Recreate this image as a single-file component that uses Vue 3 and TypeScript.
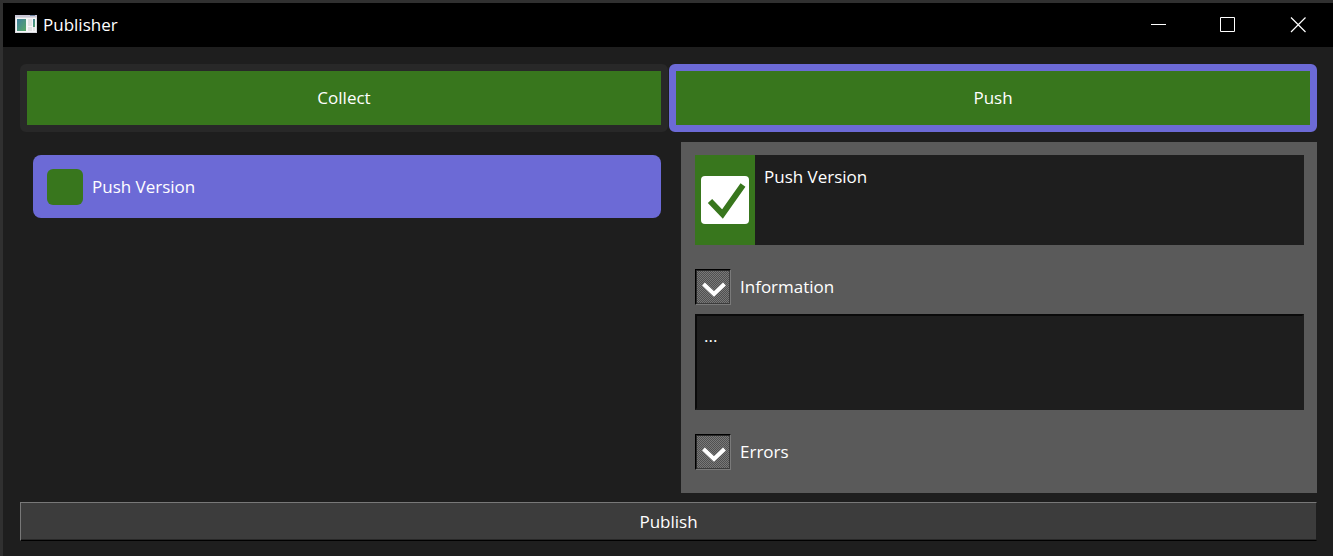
<script setup lang="ts">
import { ref } from 'vue'

const tabs: string[] = ['Collect', 'Push']
const activeTab = ref('Push')
const informationOpen = ref(true)
const information = ref('...')
const plugin = 'Push Version'
</script>

<template>
  <div class="window">
    <header class="titlebar">
      <svg class="app-icon" width="22" height="18" viewBox="0 0 22 18" aria-hidden="true">
        <defs>
          <linearGradient id="pane" x1="0" y1="0" x2="1" y2="1">
            <stop offset="0" stop-color="#3f7fa0" />
            <stop offset="1" stop-color="#58a866" />
          </linearGradient>
        </defs>
        <rect width="22" height="18" fill="#d9d9df" />
        <rect width="22" height="2" fill="#c9c6d6" />
        <rect x="15" width="5" height="1" fill="#6f86a5" />
        <rect x="1" y="3" width="20" height="14" fill="#f6f6f8" />
        <rect x="2" y="4" width="9" height="12" fill="url(#pane)" />
        <rect x="13" y="4" width="4" height="7" fill="#e2e2e4" />
        <rect x="13" y="12" width="4" height="4" fill="#e2e2e4" />
        <rect x="18" y="4" width="2" height="8" fill="url(#pane)" />
        <rect x="18" y="12" width="2" height="4" fill="#e6e6e8" />
      </svg>
      <h1 class="title">Publisher</h1>
      <div class="controls">
        <button type="button" aria-label="Minimize">
          <svg width="16" height="16" viewBox="0 0 16 16"><path d="M1 7.5H16" /></svg>
        </button>
        <button type="button" aria-label="Maximize">
          <svg width="16" height="16" viewBox="0 0 16 16"><path d="M.5 .5H14.500V14.500H.5Z" /></svg>
        </button>
        <button type="button" aria-label="Close">
          <svg width="16" height="16" viewBox="0 0 16 16"><path class="cross" d="M1 0.500L15.500 15M15.500 0.500L1 15" /></svg>
        </button>
      </div>
    </header>

    <main class="content">
      <nav class="tabs">
        <button
          v-for="tab in tabs"
          :key="tab"
          type="button"
          class="tab"
          :class="{ active: tab === activeTab }"
          @click="activeTab = tab"
        >{{ tab }}</button>
      </nav>

      <div class="columns">
        <div class="plugins">
          <button type="button" class="plugin">
            <span class="state"></span>
            <span>{{ plugin }}</span>
          </button>
        </div>

        <section class="details">
          <div class="summary">
            <div class="status">
              <svg width="48" height="48" viewBox="0 0 48 48" aria-hidden="true">
                <rect width="48" height="48" rx="4" fill="#fff" />
                <path d="M9 25L21.500 38L42 9" fill="none" stroke="#38761d" stroke-width="6" />
              </svg>
            </div>
            <p class="summary-text">{{ plugin }}</p>
          </div>

          <div class="section-head">
            <button id="toggle-information" type="button" class="toggle" @click="informationOpen = !informationOpen">
              <svg width="26" height="18" viewBox="0 0 26 18" aria-hidden="true"><path d="M3.500 4L14 14L24.500 4" /></svg>
            </button>
            <label for="toggle-information">Information</label>
          </div>
          <textarea v-show="informationOpen" v-model="information" class="log" aria-label="Information text" readonly></textarea>

          <div class="section-head">
            <button id="toggle-errors" type="button" class="toggle">
              <svg width="26" height="18" viewBox="0 0 26 18" aria-hidden="true"><path d="M3.500 4L14 14L24.500 4" /></svg>
            </button>
            <label for="toggle-errors">Errors</label>
          </div>
        </section>
      </div>

      <button type="button" class="publish">Publish</button>
    </main>
  </div>
</template>

<style>
body {
  margin: 0;
  background: #1e1e1e;
}
</style>

<style scoped>
.window,
.window * {
  box-sizing: border-box;
}
.window {
  display: flex;
  flex-direction: column;
  min-height: 100vh;
  border-top: 3px solid #303030;
  border-left: 3px solid #303030;
  background: #1e1e1e;
  color: #fff;
  font: 17px/24px "Open Sans", "Noto Sans", sans-serif;
}
button,
textarea {
  margin: 0;
  padding: 0;
  border: 0;
  border-radius: 0;
  background: none;
  color: inherit;
  font: inherit;
}
.titlebar {
  display: flex;
  align-items: center;
  height: 44px;
  padding-left: 12px;
  background: #000;
}
.app-icon {
  margin-bottom: 2px;
}
.title {
  margin: 0 0 0 6px;
  font: inherit;
}
.controls {
  display: flex;
  align-self: stretch;
  margin-left: auto;
}
.controls button {
  display: flex;
  align-items: center;
  justify-content: center;
  width: 70px;
}
.controls path {
  fill: none;
  stroke: #fff;
}
.controls .cross {
  stroke-width: 1.2;
}
.content {
  display: flex;
  flex: 1;
  flex-direction: column;
  padding: 17px 16px 15px 17px;
}
.tabs {
  display: grid;
  grid-template-columns: 1fr 1fr;
  gap: 1px;
}
.tab {
  height: 68px;
  border: 7px solid #282828;
  border-radius: 6px;
  background: #38761d;
}
.tab.active {
  border-color: #6c6ad6;
}
.columns {
  display: grid;
  flex: 1;
  grid-template-columns: 641fr 636fr;
  gap: 20px;
  margin: 10px 0 9px;
}
.plugins {
  padding: 13px 0 0 13px;
}
.plugin {
  display: flex;
  align-items: center;
  gap: 9px;
  width: 100%;
  height: 63px;
  padding: 0 14px;
  border-radius: 8px;
  background: #6c6ad6;
}
.state {
  width: 36px;
  height: 36px;
  border-radius: 6px;
  background: #38761d;
}
.details {
  display: flex;
  flex-direction: column;
  padding: 13px 13px 23px 14px;
  background: #5a5a5a;
}
.summary {
  display: flex;
  height: 90px;
  background: #1e1e1e;
}
.status {
  display: flex;
  align-items: center;
  justify-content: center;
  width: 60px;
  background: #38761d;
}
.summary-text {
  margin: 0;
  padding: 10px 9px;
}
.section-head {
  display: flex;
  align-items: center;
  gap: 9px;
  margin-top: 24px;
}
.toggle {
  display: flex;
  align-items: center;
  justify-content: center;
  width: 36px;
  height: 36px;
  padding-top: 4px;
  border: 1px solid;
  border-color: #000 #7a7a7a #7a7a7a #000;
  background: repeating-conic-gradient(#505050 0 25%, #787878 0 50%) 0 0 / 2px 2px;
  box-shadow: inset 1px 1px #282828, inset -1px -1px #3c3c3c;
}
.toggle path {
  fill: none;
  stroke: #fff;
  stroke-width: 4;
}
.log {
  display: block;
  width: 100%;
  height: 96px;
  margin-top: 9px;
  padding: 8px 7px;
  border: 2px solid;
  border-color: #0a0a0a #1e1e1e #1e1e1e #0a0a0a;
  outline: 0;
  background: #1e1e1e;
  resize: none;
}
.publish {
  height: 39px;
  border: 1px solid;
  border-color: #787878 #1e1e1e #000 #787878;
  background: #3c3c3c;
  box-shadow: inset 0 -1px #282828;
}
</style>
